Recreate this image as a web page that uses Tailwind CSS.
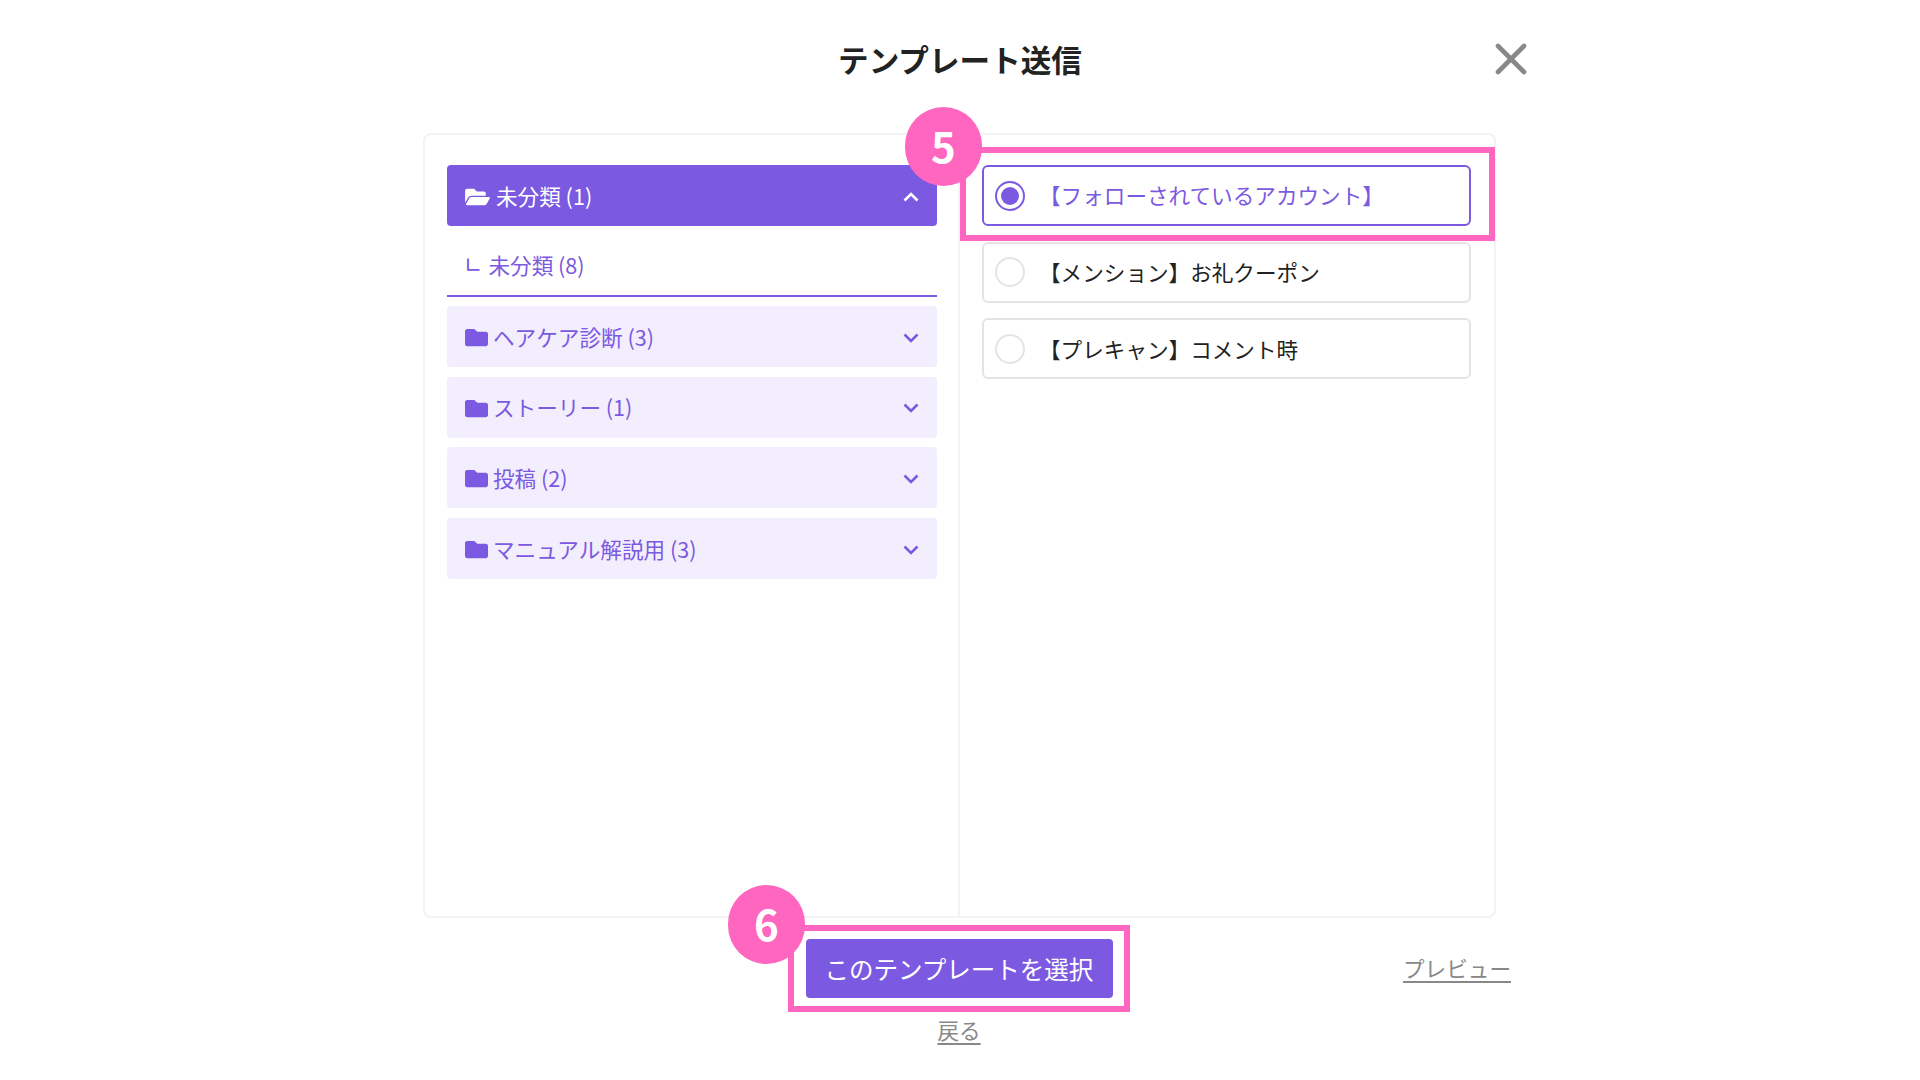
<!DOCTYPE html>
<html lang="ja"><head><meta charset="utf-8"><script src="https://cdn.jsdelivr.net/npm/@tailwindcss/browser@4"></script></head>
<body class="bg-white">
<div class="relative w-[1920px] h-[1080px] overflow-hidden bg-white text-[21.6px] text-[#222] font-['Noto_Sans_CJK_JP','Noto_Sans',sans-serif]">
  <header class="relative h-[133px] flex justify-center">
    <h1 class="mt-[39px] h-[40px] leading-[40px] text-[30.6px] font-bold text-[#222]">テンプレート送信</h1>
    <button class="absolute left-[1494px] top-[42px] w-[34px] h-[34px]">
      <svg viewBox="0 0 34 34" class="w-[34px] h-[34px]" fill="none" stroke="#888" stroke-width="4.6" stroke-linecap="round"><path d="M4 4L30 30M30 4L4 30"/></svg>
    </button>
  </header>

  <main class="ml-[423px] w-[1073px] h-[785px] grid grid-cols-[535px_538px] border-2 border-[#f3f3f3] rounded-[8px]">
    <section class="border-r-2 border-[#f3f3f3] pl-[22px] pr-[21px] pt-[30px] text-[#7b59e0]">
      <div class="h-[61px] pt-[1px] bg-[#7b59e0] text-white rounded-[4px] flex items-center pl-[18px] pr-[18px]">
        <svg viewBox="0 0 576 512" class="w-[25px] h-[22px] mt-[1px] mr-[6px]" fill="currentColor"><path d="M572.694 292.093L500.27 416.248A63.997 63.997 0 0 1 444.989 448H45.025c-18.523 0-30.064-20.093-20.731-36.093l72.424-124.155A64 64 0 0 1 152 256h399.964c18.523 0 30.064 20.093 20.73 36.093zM152 224h328v-48c0-26.51-21.49-48-48-48H272l-64-64H48C21.49 64 0 85.49 0 112v278.046l69.077-118.418C86.214 242.25 117.989 224 152 224z"/></svg>
        <span class="flex-1">未分類 (1)</span>
        <svg viewBox="0 0 16 10" class="w-[16px] h-[10px] mt-[1px]" fill="none" stroke="currentColor" stroke-width="2.6"><path d="M1.5 8.5L8 2l6.5 6.5"/></svg>
      </div>
      <div class="h-[71px] pt-[9px] border-b-2 border-[#7b59e0] flex items-center pl-[17px] mb-[9px]"><span class="mr-[6px] text-[22px] font-['DejaVu_Sans',sans-serif]">∟</span>未分類 (8)</div>
      <div class="flex flex-col gap-[9.7px]">
        <div class="h-[61px] pt-[1px] bg-[#f2eefd] rounded-[4px] flex items-center pl-[18px] pr-[18px]">
          <svg viewBox="0 0 512 512" class="w-[23px] h-[23px] mt-[1px] mr-[5px]" fill="currentColor"><path d="M464 128H272l-64-64H48C21.49 64 0 85.49 0 112v288c0 26.51 21.49 48 48 48h416c26.51 0 48-21.49 48-48V176c0-26.51-21.49-48-48-48z"/></svg>
          <span class="flex-1">ヘアケア診断 (3)</span>
          <svg viewBox="0 0 16 10" class="w-[16px] h-[10px] mt-[1px]" fill="none" stroke="currentColor" stroke-width="2.6"><path d="M1.5 1.5L8 8l6.5-6.5"/></svg>
        </div>
        <div class="h-[61px] pt-[1px] bg-[#f2eefd] rounded-[4px] flex items-center pl-[18px] pr-[18px]">
          <svg viewBox="0 0 512 512" class="w-[23px] h-[23px] mt-[1px] mr-[5px]" fill="currentColor"><path d="M464 128H272l-64-64H48C21.49 64 0 85.49 0 112v288c0 26.51 21.49 48 48 48h416c26.51 0 48-21.49 48-48V176c0-26.51-21.49-48-48-48z"/></svg>
          <span class="flex-1">ストーリー (1)</span>
          <svg viewBox="0 0 16 10" class="w-[16px] h-[10px] mt-[1px]" fill="none" stroke="currentColor" stroke-width="2.6"><path d="M1.5 1.5L8 8l6.5-6.5"/></svg>
        </div>
        <div class="h-[61px] pt-[1px] bg-[#f2eefd] rounded-[4px] flex items-center pl-[18px] pr-[18px]">
          <svg viewBox="0 0 512 512" class="w-[23px] h-[23px] mt-[1px] mr-[5px]" fill="currentColor"><path d="M464 128H272l-64-64H48C21.49 64 0 85.49 0 112v288c0 26.51 21.49 48 48 48h416c26.51 0 48-21.49 48-48V176c0-26.51-21.49-48-48-48z"/></svg>
          <span class="flex-1">投稿 (2)</span>
          <svg viewBox="0 0 16 10" class="w-[16px] h-[10px] mt-[1px]" fill="none" stroke="currentColor" stroke-width="2.6"><path d="M1.5 1.5L8 8l6.5-6.5"/></svg>
        </div>
        <div class="h-[61px] pt-[1px] bg-[#f2eefd] rounded-[4px] flex items-center pl-[18px] pr-[18px]">
          <svg viewBox="0 0 512 512" class="w-[23px] h-[23px] mt-[1px] mr-[5px]" fill="currentColor"><path d="M464 128H272l-64-64H48C21.49 64 0 85.49 0 112v288c0 26.51 21.49 48 48 48h416c26.51 0 48-21.49 48-48V176c0-26.51-21.49-48-48-48z"/></svg>
          <span class="flex-1">マニュアル解説用 (3)</span>
          <svg viewBox="0 0 16 10" class="w-[16px] h-[10px] mt-[1px]" fill="none" stroke="currentColor" stroke-width="2.6"><path d="M1.5 1.5L8 8l6.5-6.5"/></svg>
        </div>
      </div>
    </section>
    <section class="pl-[22px] pr-[27px] pt-[30px] flex flex-col gap-[15.7px]">
      <div class="h-[61px] rounded-[6px] border-2 border-[#7b59e0] flex items-center pl-[11px] text-[#7b59e0]">
        <span class="w-[30px] h-[30px] rounded-full border-2 border-[#7b59e0] flex items-center justify-center mr-[14px]"><span class="w-[18px] h-[18px] rounded-full bg-[#7b59e0]"></span></span>【フォローされているアカウント】
      </div>
      <div class="h-[61px] rounded-[6px] border-2 border-[#e4e4e4] flex items-center pl-[11px]">
        <span class="w-[30px] h-[30px] rounded-full border-2 border-[#e4e4e4] mr-[14px]"></span>【メンション】お礼クーポン
      </div>
      <div class="h-[61px] rounded-[6px] border-2 border-[#e4e4e4] flex items-center pl-[11px]">
        <span class="w-[30px] h-[30px] rounded-full border-2 border-[#e4e4e4] mr-[14px]"></span>【プレキャン】コメント時
      </div>
    </section>
  </main>

  <footer class="relative">
    <div class="flex justify-center pt-[21px]">
      <button class="w-[307px] h-[59px] pt-[2px] rounded-[4px] bg-[#7b59e0] text-white text-[24.5px] -translate-x-[1px]">このテンプレートを選択</button>
    </div>
    <a class="absolute left-[1403px] top-[34px] underline underline-offset-[4px] text-[#888]">プレビュー</a>
    <div class="flex justify-center mt-[16px]"><a class="underline underline-offset-[4px] text-[#888] -translate-x-[1px]">戻る</a></div>
  </footer>

  <div class="absolute left-[960px] top-[147px] w-[535px] h-[94px] border-[6.5px] border-[#ff66c0]"></div>
  <div class="absolute left-[788px] top-[925px] w-[342px] h-[87px] border-[6.5px] border-[#ff66c0]"></div>
  <div class="absolute left-[905px] top-[107px] w-[77px] h-[79px] pb-[5px] rounded-full bg-[#ff66c0] text-white font-bold text-[42px] flex items-center justify-center">5</div>
  <div class="absolute left-[728px] top-[885px] w-[77px] h-[79px] pb-[5px] rounded-full bg-[#ff66c0] text-white font-bold text-[42px] flex items-center justify-center">6</div>
</div>
</body></html>
